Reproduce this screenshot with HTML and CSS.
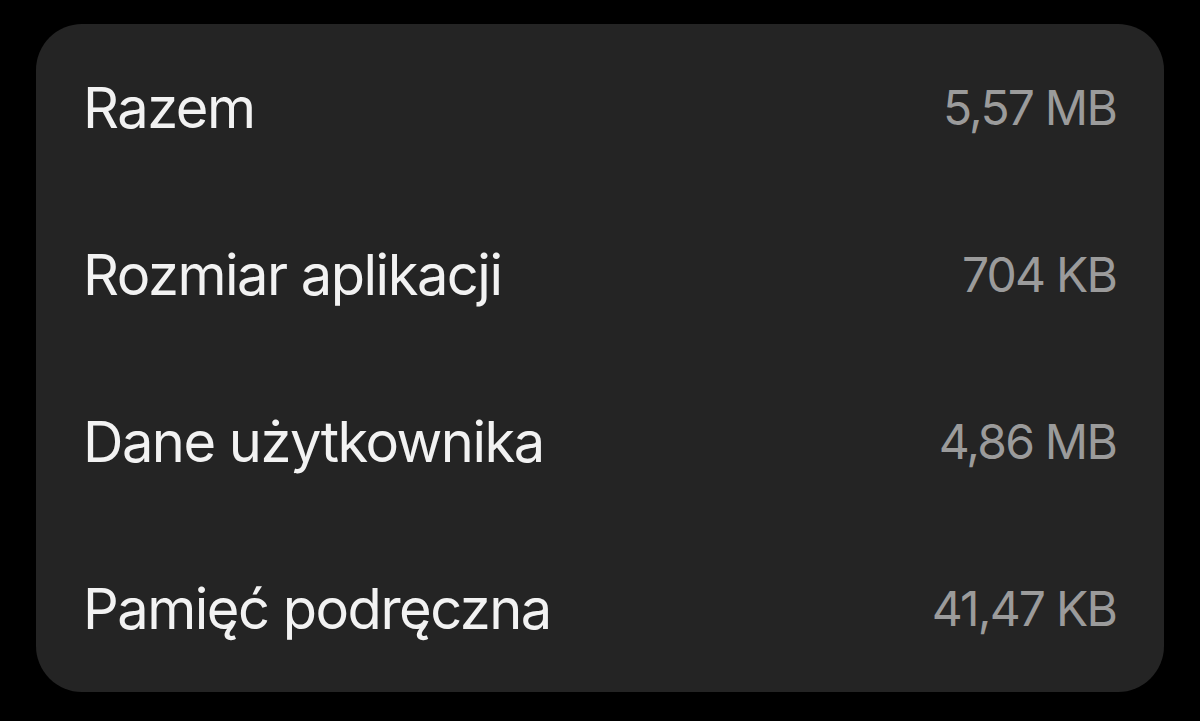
FILE: index.html
```html
<!DOCTYPE html>
<html lang="pl">
<head>
    <meta charset="UTF-8">
    <meta name="viewport" content="width=device-width, initial-scale=1.0">
    <title>Pamięć</title>
    <link rel="stylesheet" href="styles.css">
</head>
<body>
    <div class="storage-card">
        <div class="storage-row">
            <span class="storage-label">Razem</span>
            <span class="storage-value">5,57 MB</span>
        </div>
        <div class="storage-row">
            <span class="storage-label">Rozmiar aplikacji</span>
            <span class="storage-value">704 KB</span>
        </div>
        <div class="storage-row">
            <span class="storage-label">Dane użytkownika</span>
            <span class="storage-value">4,86 MB</span>
        </div>
        <div class="storage-row">
            <span class="storage-label">Pamięć podręczna</span>
            <span class="storage-value">41,47 KB</span>
        </div>
    </div>
</body>
</html>
```

FILE: styles.css
```css
* {
    box-sizing: border-box;
    margin: 0;
    padding: 0;
    font-family: Inter, 'Noto Sans', sans-serif;
}

body {
    background-color: #000;
    padding: 24px 36px 30px 36px;
}

.storage-card {
    background-color: #242424;
    border-radius: 46px;
    display: flex;
    flex-direction: column;
}

.storage-row {
    height: 167px;
    display: flex;
    align-items: center;
    justify-content: space-between;
    padding: 0 48px 0 47px;
}

.storage-label {
    color: #f2f2f2;
    font-size: 56px;
    font-weight: 400;
    letter-spacing: -1.5px;
}

.storage-value {
    color: #9b9b9b;
    font-size: 48px;
    font-weight: 400;
    letter-spacing: -1.8px;
}
```
